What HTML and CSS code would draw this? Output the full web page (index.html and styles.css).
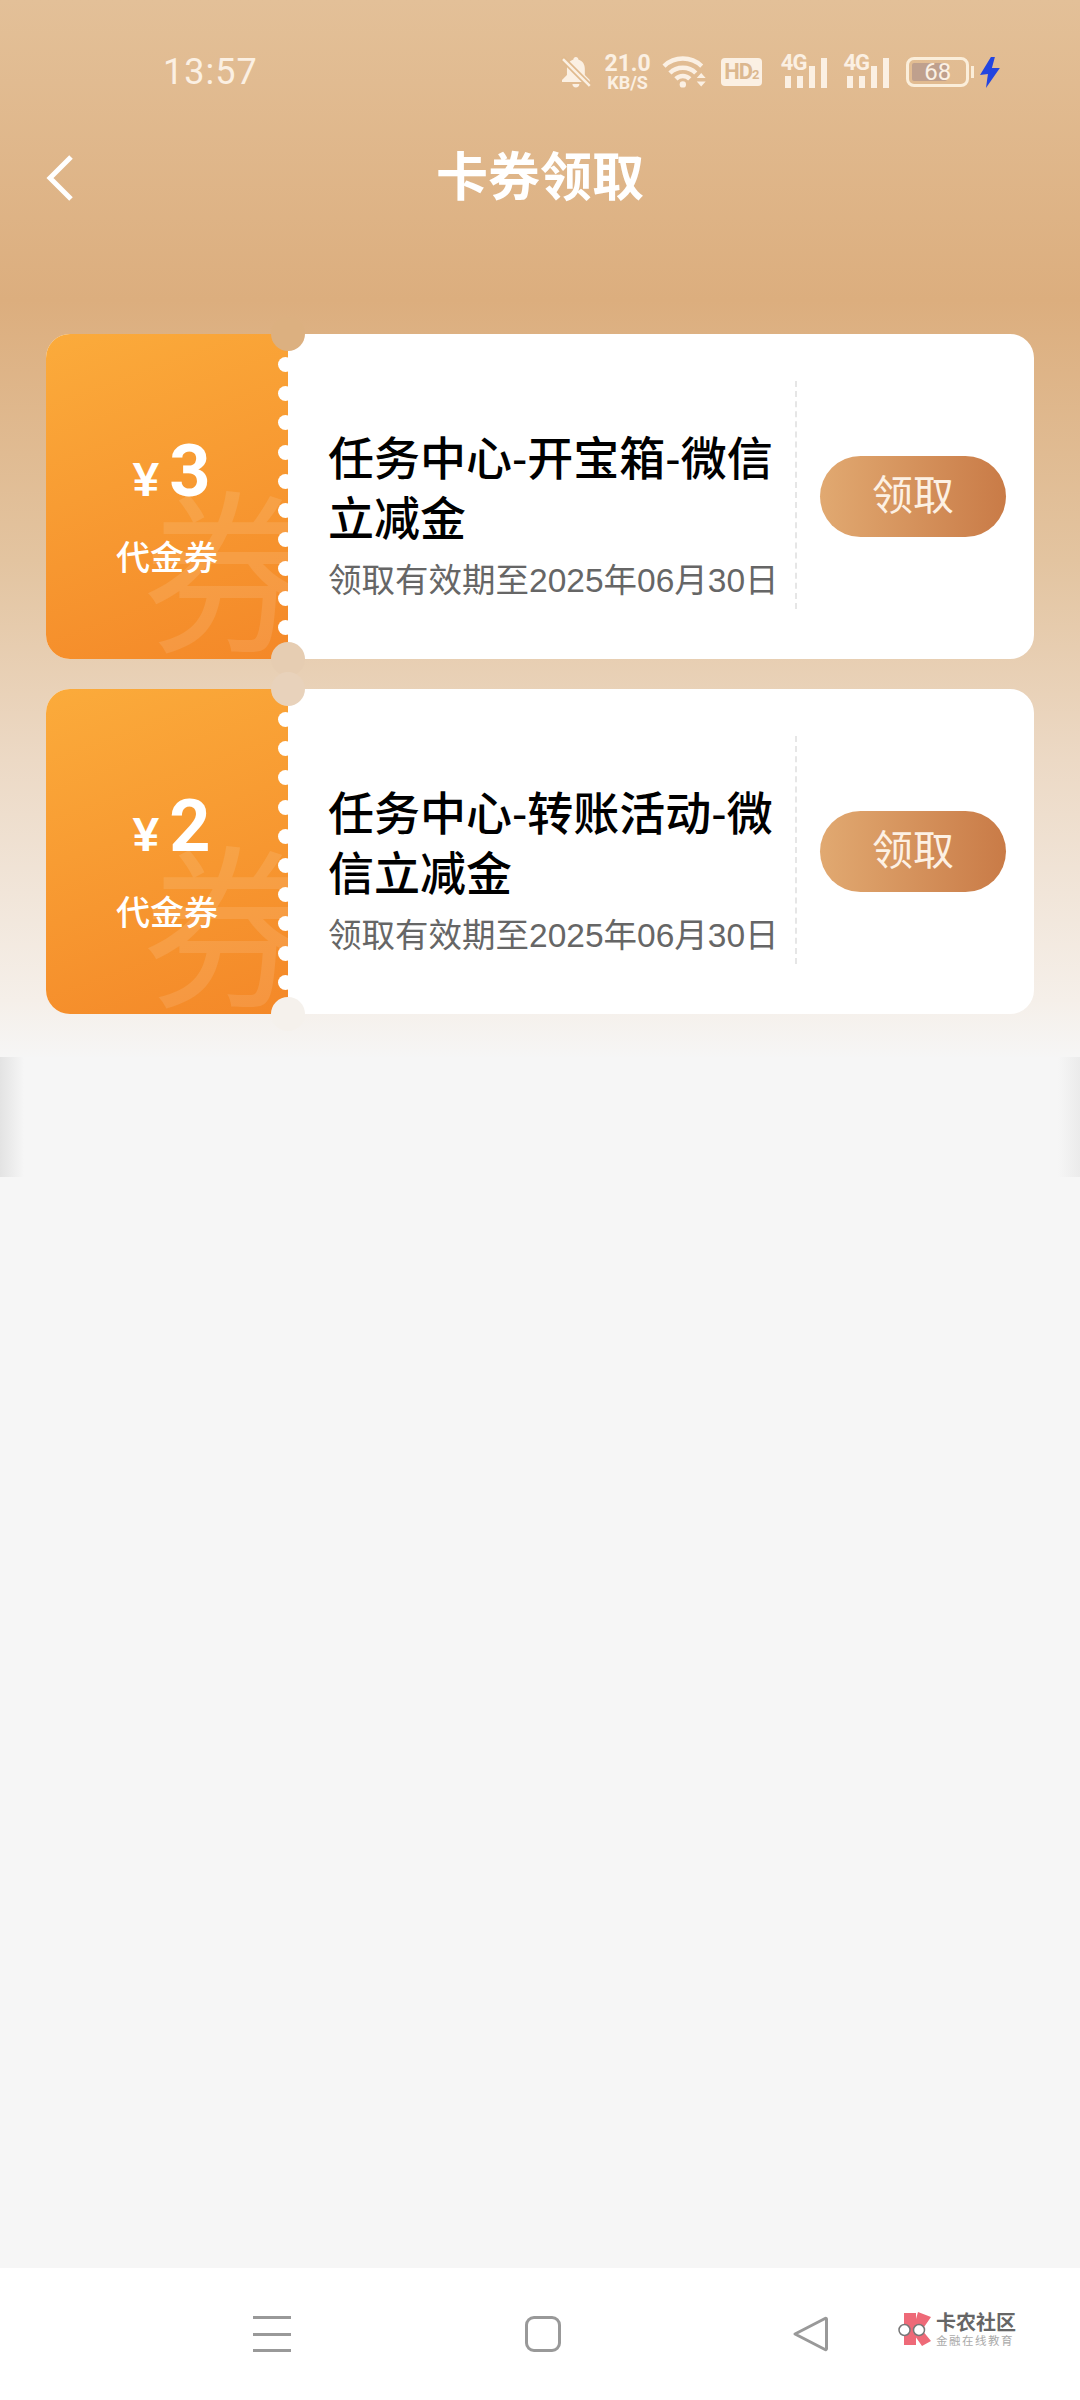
FILE: index.html
```html
<!DOCTYPE html>
<html>
<head>
    <meta charset="utf-8" />
    <title>卡券领取</title>
    <link rel="stylesheet" href="styles.css">
</head>
<body>
    <div class="page">
        <div class="statusBar">
            <span class="time">13:57</span>
            <div class="statusIcons">
                <svg class="bell" width="30" height="32" viewBox="0 0 30 32">
                    <path d="M15 1c-1.500 0-2.500 1-2.500 2.500C8 5 6 8.500 6 13v6l-5 5v2h28v-2l-5-5v-6c0-4.500-2-8-6.500-9.500C17.500 2 16.500 1 15 1z" fill="#fbf0e3"/>
                    <path d="M11.500 28h7c0 2-1.500 3.500-3.500 3.500s-3.500-1.500-3.500-3.500z" fill="#fbf0e3"/>
                    <path d="M1 2l28 28" stroke="#e0ba8e" stroke-width="6"/>
                    <path d="M2 3l27 27" stroke="#fbf0e3" stroke-width="2.500"/>
                </svg>
                <div class="speed">
                    <span class="speedNum">21.0</span>
                    <span class="speedUnit">KB/S</span>
                </div>
                <svg class="wifi" width="46" height="34" viewBox="0 0 46 34">
                    <g fill="none" stroke="#fbf0e3" stroke-width="4.500">
                        <path d="M2 11C13 1 29 1 40 11"/>
                        <path d="M8 18C15 11 27 11 34 18"/>
                        <path d="M14 24C18 20 24 20 28 24"/>
                    </g>
                    <circle cx="21" cy="29.500" r="3.200" fill="#fbf0e3"/>
                    <path d="M35 23l4.500-5 4.500 5zM35 26.500h9l-4.500 5z" fill="#fbf0e3"/>
                </svg>
                <span class="hd">HD<small>2</small></span>
                <div class="signal">
                    <span class="signalText">4G</span>
                    <i class="bar barA"></i><i class="bar barA"></i><i class="bar barB"></i><i class="bar barC"></i>
                </div>
                <div class="signal signal2">
                    <span class="signalText">4G</span>
                    <i class="bar barA"></i><i class="bar barA"></i><i class="bar barB"></i><i class="bar barC"></i>
                </div>
                <div class="battery">
                    <div class="batteryBody"><span class="batteryFill" style="width: 68%"></span><span class="batteryNum">68</span></div>
                    <i class="batteryCap"></i>
                </div>
                <svg class="bolt" width="20" height="31" viewBox="0 0 20 31">
                    <path d="M11 0L0 18l8-1-2 14 14-20h-8l3-11z" fill="#2345e0"/>
                </svg>
            </div>
        </div>

        <div class="header">
            <svg class="back" width="28" height="48" viewBox="0 0 28 48">
                <path d="M25 3L4 24l21 21" fill="none" stroke="#fff" stroke-width="5"/>
            </svg>
            <h1>卡券领取</h1>
        </div>

        <div class="list">
            <div class="ticket">
                <div class="stub">
                    <span class="watermark">券</span>
                    <div class="amount"><span class="yen">¥</span><span class="num">3</span></div>
                    <div class="stubLabel">代金券</div>
                    <div class="dots"><i></i><i></i><i></i><i></i><i></i><i></i><i></i><i></i><i></i><i></i></div>
                </div>
                <div class="info">
                    <div class="name">任务中心-开宝箱-微信立减金</div>
                    <div class="expire">领取有效期至2025年06月30日</div>
                </div>
                <div class="action"><span class="getBtn">领取</span></div>
                <i class="notch notchTop"></i>
                <i class="notch notchBottom"></i>
            </div>

            <div class="ticket">
                <div class="stub">
                    <span class="watermark">券</span>
                    <div class="amount"><span class="yen">¥</span><span class="num">2</span></div>
                    <div class="stubLabel">代金券</div>
                    <div class="dots"><i></i><i></i><i></i><i></i><i></i><i></i><i></i><i></i><i></i><i></i></div>
                </div>
                <div class="info">
                    <div class="name">任务中心-转账活动-微信立减金</div>
                    <div class="expire">领取有效期至2025年06月30日</div>
                </div>
                <div class="action"><span class="getBtn">领取</span></div>
                <i class="notch notchTop notchTop2"></i>
                <i class="notch notchBottom notchBottom2"></i>
            </div>
        </div>

        <div class="band"></div>

        <div class="navBar">
            <div class="menuIcon"><i></i><i></i><i></i></div>
            <div class="homeIcon"></div>
            <svg class="backIcon" width="37" height="38" viewBox="0 0 37 38">
                <path d="M33 3.500L3 19l30 15.500c.6.300 1.500 0 1.500-.8V4.300c0-.8-.9-1.100-1.500-.8z" fill="none" stroke="#999" stroke-width="3" stroke-linejoin="round"/>
            </svg>
            <div class="logo">
                <svg width="36" height="36" viewBox="0 0 36 36">
                    <path d="M6 1h12v32H6z" fill="#ee6a78"/>
                    <path d="M20 0l13 5-9 13 9 11-9 5-7-10-1-10z" fill="#ee6a78"/>
                    <circle cx="6.500" cy="18" r="5.500" fill="#fff" stroke="#777" stroke-width="1.500"/>
                    <circle cx="21" cy="18" r="5.500" fill="#fff" stroke="#777" stroke-width="1.500"/>
                </svg>
                <div class="logoText">
                    <span class="logoTitle">卡农社区</span>
                    <span class="logoSub">金融在线教育</span>
                </div>
            </div>
        </div>
    </div>
</body>
</html>
```

FILE: styles.css
```css
* {
    box-sizing: border-box;
}

body {
    margin: 0;
    font-family: "Liberation Sans", "Noto Sans CJK SC", sans-serif;
}

.page {
    width: 1080px;
    height: 2400px;
    display: flex;
    flex-direction: column;
    background-color: #f6f6f6;
    background-image: linear-gradient(to bottom, #e3c098 0, #dcae7e 300px, #e3c4a0 560px, #ecd9c5 760px, #f5efe9 1000px, #f6f6f6 1060px);
    background-repeat: no-repeat;
    background-size: 100% 1060px;
}

.statusBar {
    height: 108px;
    padding: 54px 0 0 163px;
    display: flex;
    align-items: flex-start;
    justify-content: space-between;
}

.time {
    font-family: Roboto, sans-serif;
    font-size: 36px;
    line-height: 36px;
    color: #fbf0e3;
    letter-spacing: 1px;
}

.statusIcons {
    width: 437px;
    height: 34px;
    margin-right: 80px;
    margin-top: 1px;
    display: flex;
    align-items: center;
}

.bell {
    margin-right: 13px;
    margin-left: -2px;
}

.speed {
    width: 48px;
    margin-right: 11px;
    display: flex;
    flex-direction: column;
    align-items: center;
    color: #fbf0e3;
    font-family: Roboto, sans-serif;
    font-weight: bold;
}

.speedNum {
    font-size: 23px;
    line-height: 20px;
}

.speedUnit {
    font-size: 18px;
    line-height: 17px;
}

.wifi {
    margin-right: 13px;
}

.hd {
    width: 41px;
    height: 28px;
    margin-right: 19px;
    border-radius: 4px;
    background-color: #fbf0e3;
    color: #dcb88f;
    font-family: Roboto, sans-serif;
    font-weight: bold;
    font-size: 22px;
    line-height: 28px;
    text-align: center;
    letter-spacing: -1px;
}

.hd small {
    font-size: 13px;
}

.signal {
    width: 47px;
    height: 32px;
    margin-right: 16px;
    padding-left: 4px;
    display: flex;
    align-items: flex-end;
    gap: 6px;
    position: relative;
}

.signalText {
    position: absolute;
    left: 0;
    top: -4px;
    font-family: Roboto, sans-serif;
    font-weight: bold;
    font-size: 22px;
    line-height: 22px;
    color: #fbf0e3;
    letter-spacing: -1px;
}

.bar {
    width: 6px;
    background-color: #fbf0e3;
    display: block;
}

.barA {
    height: 12px;
}

.barB {
    height: 22px;
}

.barC {
    height: 30px;
}

.battery {
    width: 68px;
    margin-right: 6px;
    display: flex;
    align-items: center;
}

.batteryBody {
    width: 63px;
    height: 30px;
    border: 3px solid #fbeeda;
    border-radius: 8px;
    padding: 3px;
    position: relative;
}

.batteryFill {
    display: block;
    height: 100%;
    background-color: #bfa08d;
    border-radius: 2px;
}

.batteryNum {
    position: absolute;
    left: 0;
    right: 0;
    top: 0;
    text-align: center;
    font-family: Roboto, sans-serif;
    font-size: 24px;
    line-height: 24px;
    color: #fbf0e3;
}

.batteryCap {
    display: block;
    width: 3px;
    height: 12px;
    margin-left: 2px;
    background-color: #fbeeda;
}

.header {
    height: 140px;
    padding: 0 46px;
    display: flex;
    align-items: center;
    position: relative;
}

.header h1 {
    position: absolute;
    left: 0;
    right: 0;
    top: 0;
    margin: 0;
    text-align: center;
    font-size: 52px;
    line-height: 140px;
    font-weight: bold;
    color: #fff;
}

.list {
    margin-top: 86px;
    padding: 0 46px;
    display: flex;
    flex-direction: column;
    gap: 30px;
}

.ticket {
    height: 325px;
    display: flex;
    position: relative;
    background-color: #fff;
    border-radius: 24px;
}

.stub {
    width: 242px;
    display: flex;
    flex-direction: column;
    align-items: center;
    padding-top: 96px;
    background-image: linear-gradient(160deg, #fbab3b, #f48828);
    border-radius: 24px 0 0 24px;
    position: relative;
    overflow: hidden;
}

.watermark {
    position: absolute;
    left: 96px;
    top: 150px;
    font-size: 175px;
    line-height: 190px;
    color: rgba(255, 255, 255, 0.11);
}

.amount {
    padding-left: 9px;
    display: flex;
    align-items: baseline;
    color: #fff;
    position: relative;
}

.yen {
    font-size: 48px;
    font-weight: bold;
    margin-right: 10px;
}

.num {
    font-family: Roboto, sans-serif;
    font-size: 72px;
    line-height: 84px;
    font-weight: bold;
}

.stubLabel {
    margin-top: 22px;
    font-size: 34px;
    line-height: 44px;
    font-weight: 500;
    color: #fff;
    position: relative;
}

.dots {
    position: absolute;
    right: -5px;
    top: 23px;
    display: flex;
    flex-direction: column;
    gap: 14.200px;
}

.dots i {
    display: block;
    width: 15px;
    height: 15px;
    border-radius: 50%;
    background-color: #fff;
}

.info {
    width: 509px;
    padding: 43px 12px 0 40px;
    margin: 47px 0 50px;
    border-right: 2px dashed #e6e6e6;
    display: flex;
    flex-direction: column;
    justify-content: center;
}

.name {
    font-size: 46px;
    line-height: 60px;
    font-weight: 500;
    color: #000;
}

.expire {
    margin-top: 9px;
    font-size: 33.500px;
    line-height: 46px;
    color: #666;
    white-space: nowrap;
}

.action {
    flex: 1;
    padding: 0 28px 0 23px;
    display: flex;
    align-items: center;
}

.getBtn {
    width: 186px;
    height: 81px;
    border-radius: 41px;
    background-image: linear-gradient(to right, #e1a971, #c97b47);
    color: #fdf1e4;
    font-size: 41px;
    line-height: 80px;
    text-align: center;
}

.notch {
    position: absolute;
    left: 225px;
    width: 34px;
    height: 34px;
    border-radius: 50%;
}

.notchTop {
    top: -17px;
    background-color: #dcb080;
}

.notchBottom {
    bottom: -17px;
    background-color: #e6cdb2;
}

.notchTop2 {
    background-color: #e8d2bb;
}

.notchBottom2 {
    background-color: #f5f1ec;
}

.band {
    height: 120px;
    margin-top: 43px;
    background-image: linear-gradient(to right, #e3e3e3, #f6f6f6 24px, #f6f6f6 1058px, #ebebeb);
}

.navBar {
    height: 132px;
    margin-top: auto;
    background-color: #fff;
    display: flex;
    align-items: flex-start;
    padding: 48px 0 0 253px;
}

.menuIcon {
    width: 38px;
    display: flex;
    flex-direction: column;
    gap: 13.500px;
}

.menuIcon i {
    display: block;
    height: 3px;
    background-color: #999;
}

.homeIcon {
    width: 36px;
    height: 36px;
    margin-left: 234px;
    border: 3px solid #999;
    border-radius: 9px;
}

.backIcon {
    margin-left: 231px;
    margin-top: -1px;
}

.logo {
    margin-left: 69px;
    margin-top: -4px;
    display: flex;
    align-items: center;
    gap: 2px;
}

.logoText {
    display: flex;
    flex-direction: column;
}

.logoTitle {
    font-size: 20px;
    line-height: 22px;
    font-weight: bold;
    color: #666;
}

.logoSub {
    font-size: 11.500px;
    line-height: 14px;
    letter-spacing: 1.500px;
    color: #aaa;
}
```
